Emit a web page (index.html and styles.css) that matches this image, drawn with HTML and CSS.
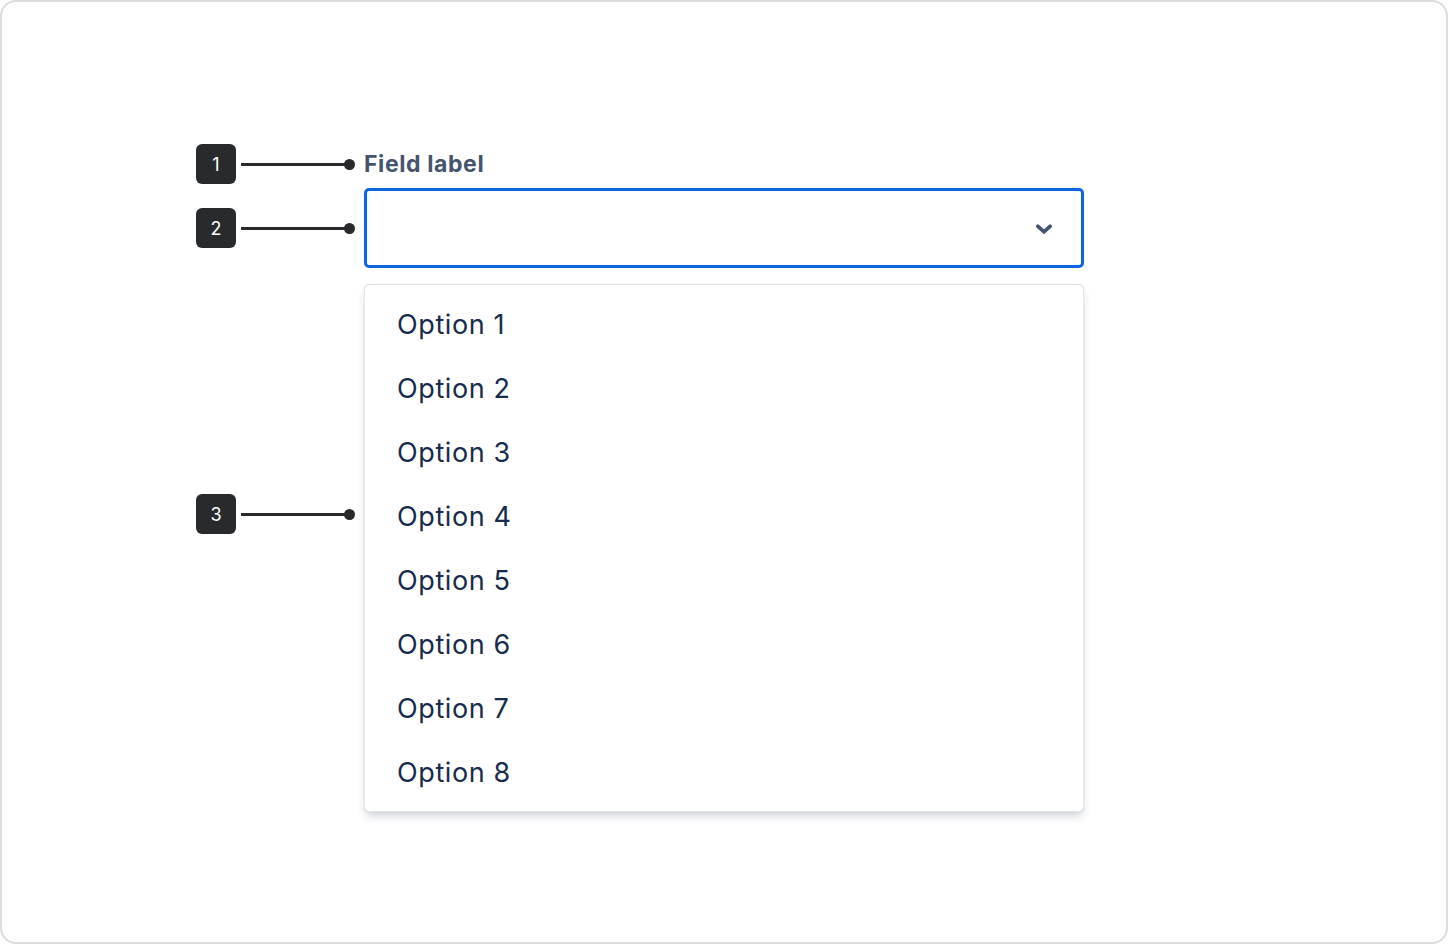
FILE: index.html
```html
<!DOCTYPE html>
<html lang="en">
<head>
<meta charset="utf-8">
<title>Select anatomy</title>
<link rel="stylesheet" href="styles.css">
</head>
<body>
<div class="frame">
  <div class="anatomy">
    <div class="marker marker-label">
      <span class="badge">1</span><span class="line"></span><span class="dot"></span>
    </div>
    <div class="field-label">Field label</div>

    <div class="marker marker-input">
      <span class="badge">2</span><span class="line"></span><span class="dot"></span>
    </div>
    <div class="select">
      <svg class="chevron" width="20" height="20" viewBox="0 0 20 20" aria-hidden="true">
        <path d="M3.8 7.2 L10 12.8 L16.2 7.2" fill="none" stroke="#44546f" stroke-width="3.6" stroke-linecap="round" stroke-linejoin="round"/>
      </svg>
    </div>

    <div class="marker marker-menu">
      <span class="badge">3</span><span class="line"></span><span class="dot"></span>
    </div>
    <ul class="menu">
      <li class="option">Option 1</li>
      <li class="option">Option 2</li>
      <li class="option">Option 3</li>
      <li class="option">Option 4</li>
      <li class="option">Option 5</li>
      <li class="option">Option 6</li>
      <li class="option">Option 7</li>
      <li class="option">Option 8</li>
    </ul>
  </div>
</div>
</body>
</html>
```

FILE: styles.css
```css
* {
  box-sizing: border-box;
}

html, body {
  margin: 0;
  padding: 0;
  background: #ffffff;
}

body {
  font-family: Inter, "Noto Sans", "Liberation Sans", sans-serif;
}

.frame {
  width: 1448px;
  height: 944px;
  border: 2px solid #dcdcdc;
  border-radius: 16px;
  background: #ffffff;
  padding: 142px 0 0 194px;
}

.anatomy {
  display: grid;
  grid-template-columns: 168px 720px;
  grid-template-rows: 44px 80px auto;
}

/* numbered callout: badge, leader line, end dot */
.marker {
  display: flex;
  align-items: center;
  height: 40px;
}

.marker-label {
  align-self: start;
}

.marker-input {
  align-self: center;
}

.marker-menu {
  align-self: start;
  margin-top: 226px;
}

.badge {
  flex: none;
  width: 40px;
  height: 40px;
  border-radius: 6px;
  background: #292a2e;
  color: #ffffff;
  font-size: 18px;
  line-height: 41px;
  text-align: center;
}

.line {
  flex: none;
  width: 105px;
  height: 3px;
  margin-left: 5px;
  background: #292a2e;
}

.dot {
  flex: none;
  width: 11px;
  height: 11px;
  margin-left: -2px;
  border-radius: 50%;
  background: #292a2e;
}

.field-label {
  align-self: start;
  height: 40px;
  line-height: 40px;
  font-size: 23px;
  font-weight: 700;
  color: #44546f;
  letter-spacing: 0.6px;
}

.select {
  height: 80px;
  border: 3px solid #0c66e4;
  border-radius: 5px;
  display: flex;
  align-items: center;
  justify-content: flex-end;
  padding-right: 27px;
  padding-top: 2px;
}

.chevron {
  display: block;
}

.menu {
  list-style: none;
  margin: 16px 0 0;
  padding: 8px 0 6px;
  border: 1px solid #e4e6ea;
  border-radius: 5px;
  background: #ffffff;
  box-shadow: 0 6px 10px -2px rgba(9, 30, 66, 0.2), 0 0 1px rgba(9, 30, 66, 0.22);
}

.option {
  height: 64px;
  line-height: 64px;
  padding-left: 32px;
  font-size: 27px;
  letter-spacing: 0.6px;
  color: #172b4d;
}
```
